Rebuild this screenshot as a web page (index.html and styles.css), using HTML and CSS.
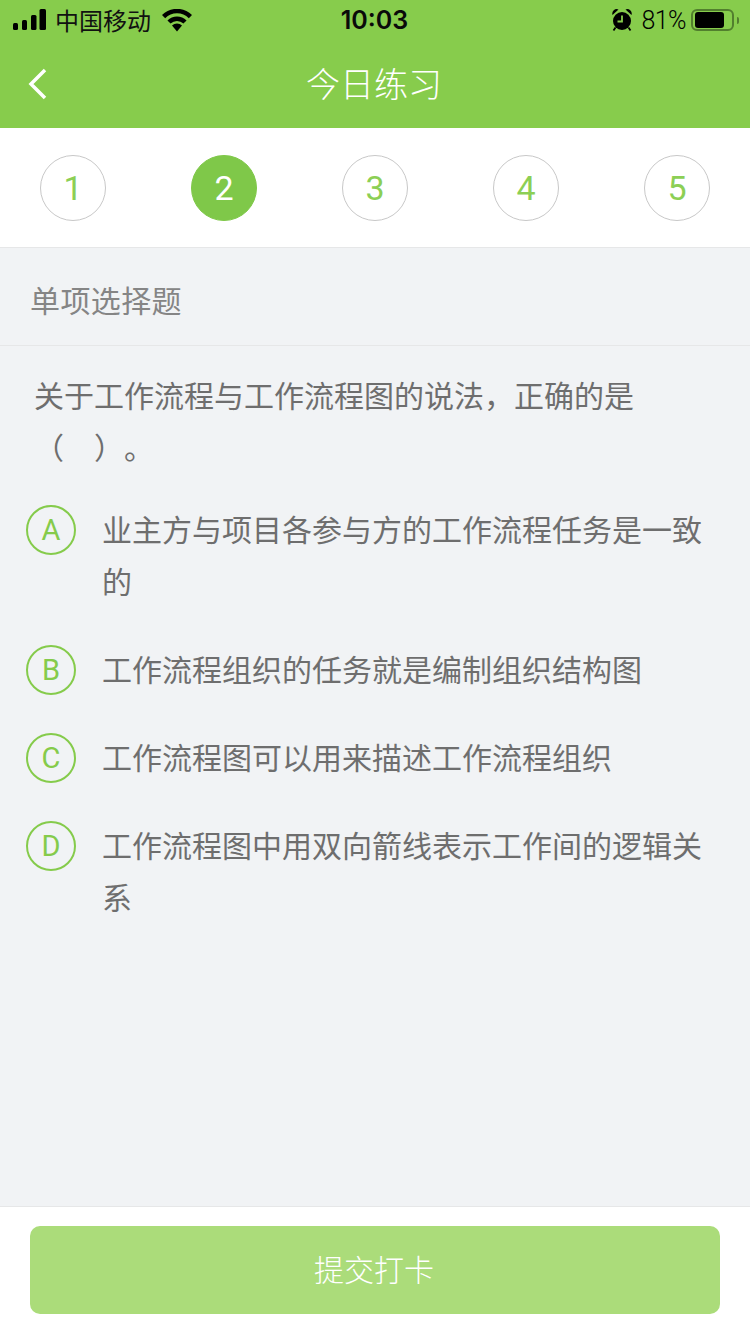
FILE: index.html
```html
<!DOCTYPE html>
<html lang="zh-CN">
<head>
    <meta charset="UTF-8">
    <title>今日练习</title>
    <link rel="stylesheet" href="styles.css">
</head>
<body>
    <div class="page">
        <div class="top">
            <div class="status">
                <div class="status-left">
                    <svg class="signal" width="33" height="22" viewBox="0 0 33 22">
                        <rect x="0" y="14" width="5" height="7" rx="1.5"/>
                        <rect x="9" y="11" width="5" height="10" rx="1.5"/>
                        <rect x="18" y="6" width="5.500" height="15" rx="1.5"/>
                        <rect x="26.500" y="0" width="6.500" height="21" rx="1.5"/>
                    </svg>
                    <span class="carrier">中国移动</span>
                    <svg class="wifi" width="30" height="23" viewBox="0 0 30 23">
                        <path d="M1.600 7.600A19 19 0 0 1 28.400 7.600" fill="none" stroke="#000" stroke-width="4.500"/>
                        <path d="M7 13A11.500 11.500 0 0 1 23 13" fill="none" stroke="#000" stroke-width="4.500"/>
                        <path d="M15 22.500L10 16.500A7.500 7.500 0 0 1 20 16.500Z"/>
                    </svg>
                </div>
                <div class="time">10:03</div>
                <div class="status-right">
                    <svg class="alarm" width="20" height="22" viewBox="0 0 20 22">
                        <circle cx="10" cy="12" r="9"/>
                        <path d="M0.500 6A4.500 4.500 0 0 1 6.500 0.500ZM19.500 6A4.500 4.500 0 0 0 13.500 0.500Z"/>
                        <path d="M3.500 18.500L1.500 21.500M16.500 18.500L18.500 21.500" stroke="#000" stroke-width="1.800"/>
                        <path d="M10 6.500V12.500H5.500" fill="none" stroke="#87cc4c" stroke-width="1.800"/>
                    </svg>
                    <span class="percent">81%</span>
                    <div class="battery"><div class="battery-fill"></div></div>
                    <div class="battery-tip"></div>
                </div>
            </div>
            <div class="nav">
                <svg class="back" width="20" height="32" viewBox="0 0 20 32">
                    <path d="M17 2L3 16L17 30" fill="none" stroke="#fff" stroke-width="3.500"/>
                </svg>
                <div class="nav-title">今日练习</div>
                <div></div>
            </div>
        </div>
        <div class="steps">
            <div class="step">1</div>
            <div class="step on">2</div>
            <div class="step">3</div>
            <div class="step">4</div>
            <div class="step">5</div>
        </div>
        <div class="main">
            <div class="kind">单项选择题</div>
            <div class="question">关于工作流程与工作流程图的说法，正确的是（&nbsp;&nbsp;&nbsp;&#8198;）。</div>
            <div class="options">
                <div class="option">
                    <div class="letter">A</div>
                    <div class="option-text">业主方与项目各参与方的工作流程任务是一致的</div>
                </div>
                <div class="option">
                    <div class="letter">B</div>
                    <div class="option-text">工作流程组织的任务就是编制组织结构图</div>
                </div>
                <div class="option">
                    <div class="letter">C</div>
                    <div class="option-text">工作流程图可以用来描述工作流程组织</div>
                </div>
                <div class="option">
                    <div class="letter">D</div>
                    <div class="option-text">工作流程图中用双向箭线表示工作间的逻辑关系</div>
                </div>
            </div>
        </div>
        <div class="footer">
            <button class="submit">提交打卡</button>
        </div>
    </div>
</body>
</html>
```

FILE: styles.css
```css
html, body {margin: 0; padding: 0; width: 100%;}
body {font-family: "Liberation Sans", "Noto Sans CJK SC", sans-serif; background: #f1f3f5;}
.page {display: flex; flex-direction: column; height: 1334px; overflow: hidden;}

.top {background: #87cc4c;}
.status {display: grid; grid-template-columns: 1fr auto 1fr; align-items: center; height: 40px; padding: 0 11px 0 13px;}
.status-left {display: flex; align-items: center;}
.signal {margin-right: 9px;}
.carrier {padding-bottom: 2px; font-size: 24px; color: #111;}
.wifi {margin-left: 11px;}
.time {padding-right: 3px; font-family: Inter, sans-serif; font-size: 25px; font-weight: 600; color: #0a0a0a;}
.status-right {display: flex; align-items: center; justify-content: flex-end;}
.alarm {margin-right: 10px;}
.percent {font-family: Roboto, sans-serif; font-weight: 300; font-size: 25px; letter-spacing: -0.6px; color: #000; margin-right: 5px;}
.battery {box-sizing: border-box; width: 43px; height: 22px; padding: 1px 2px; border: 2px solid #527f2e; border-radius: 6px;}
.battery-fill {width: 29px; height: 16px; background: #000; border-radius: 3px;}
.battery-tip {width: 2px; height: 7px; margin-left: 3px; background: #527f2e; border-radius: 0 2px 2px 0;}

.nav {display: grid; grid-template-columns: 1fr auto 1fr; align-items: center; height: 88px; padding: 0 30px 0 28px;}
.nav-title {padding-bottom: 4px; font-size: 34px; color: #fff; font-weight: 300;}

.steps {display: flex; justify-content: space-between; padding: 27px 40px 26px; background: #fff; border-bottom: 1px solid #e6e7e8;}
.step {box-sizing: border-box; width: 66px; height: 66px; border: 1px solid #c8c8c8; border-radius: 50%; font-family: Roboto, sans-serif; font-size: 34px; line-height: 64px; text-align: center; color: #8ccf55;}
.step.on {background: #7fc849; border-color: #7fc849; color: #fff;}

.main {flex: 1;}
.kind {height: 97px; line-height: 107px; padding-left: 30px; font-size: 30px; letter-spacing: 0.4px; color: #858585; border-bottom: 1px solid #e6e7e8;}
.question {padding: 25px 30px 0 34px; font-size: 30px; line-height: 52px; color: #6e6e6e; text-spacing-trim: space-all;}
.options {display: flex; flex-direction: column; gap: 35px; margin-top: 29px; padding: 0 30px 0 26px;}
.option {display: flex; align-items: flex-start; gap: 26px;}
.letter {box-sizing: border-box; flex: none; width: 50px; height: 50px; margin-top: 1px; border: 2px solid #85cb4b; border-radius: 50%; font-family: Roboto, sans-serif; font-size: 29px; line-height: 47px; text-align: center; color: #85cb4b;}
.option-text {padding-top: 1px; font-size: 30px; line-height: 52px; color: #6e6e6e;}

.footer {padding: 19px 30px 20px; background: #fff; border-top: 1px solid #e6e7e8;}
.submit {display: block; width: 100%; height: 88px; padding: 0 2px 4px 0; border: 0; border-radius: 10px; background: #abdc7a; color: #fff; font-family: inherit; font-size: 30px; font-weight: 300;}
```
